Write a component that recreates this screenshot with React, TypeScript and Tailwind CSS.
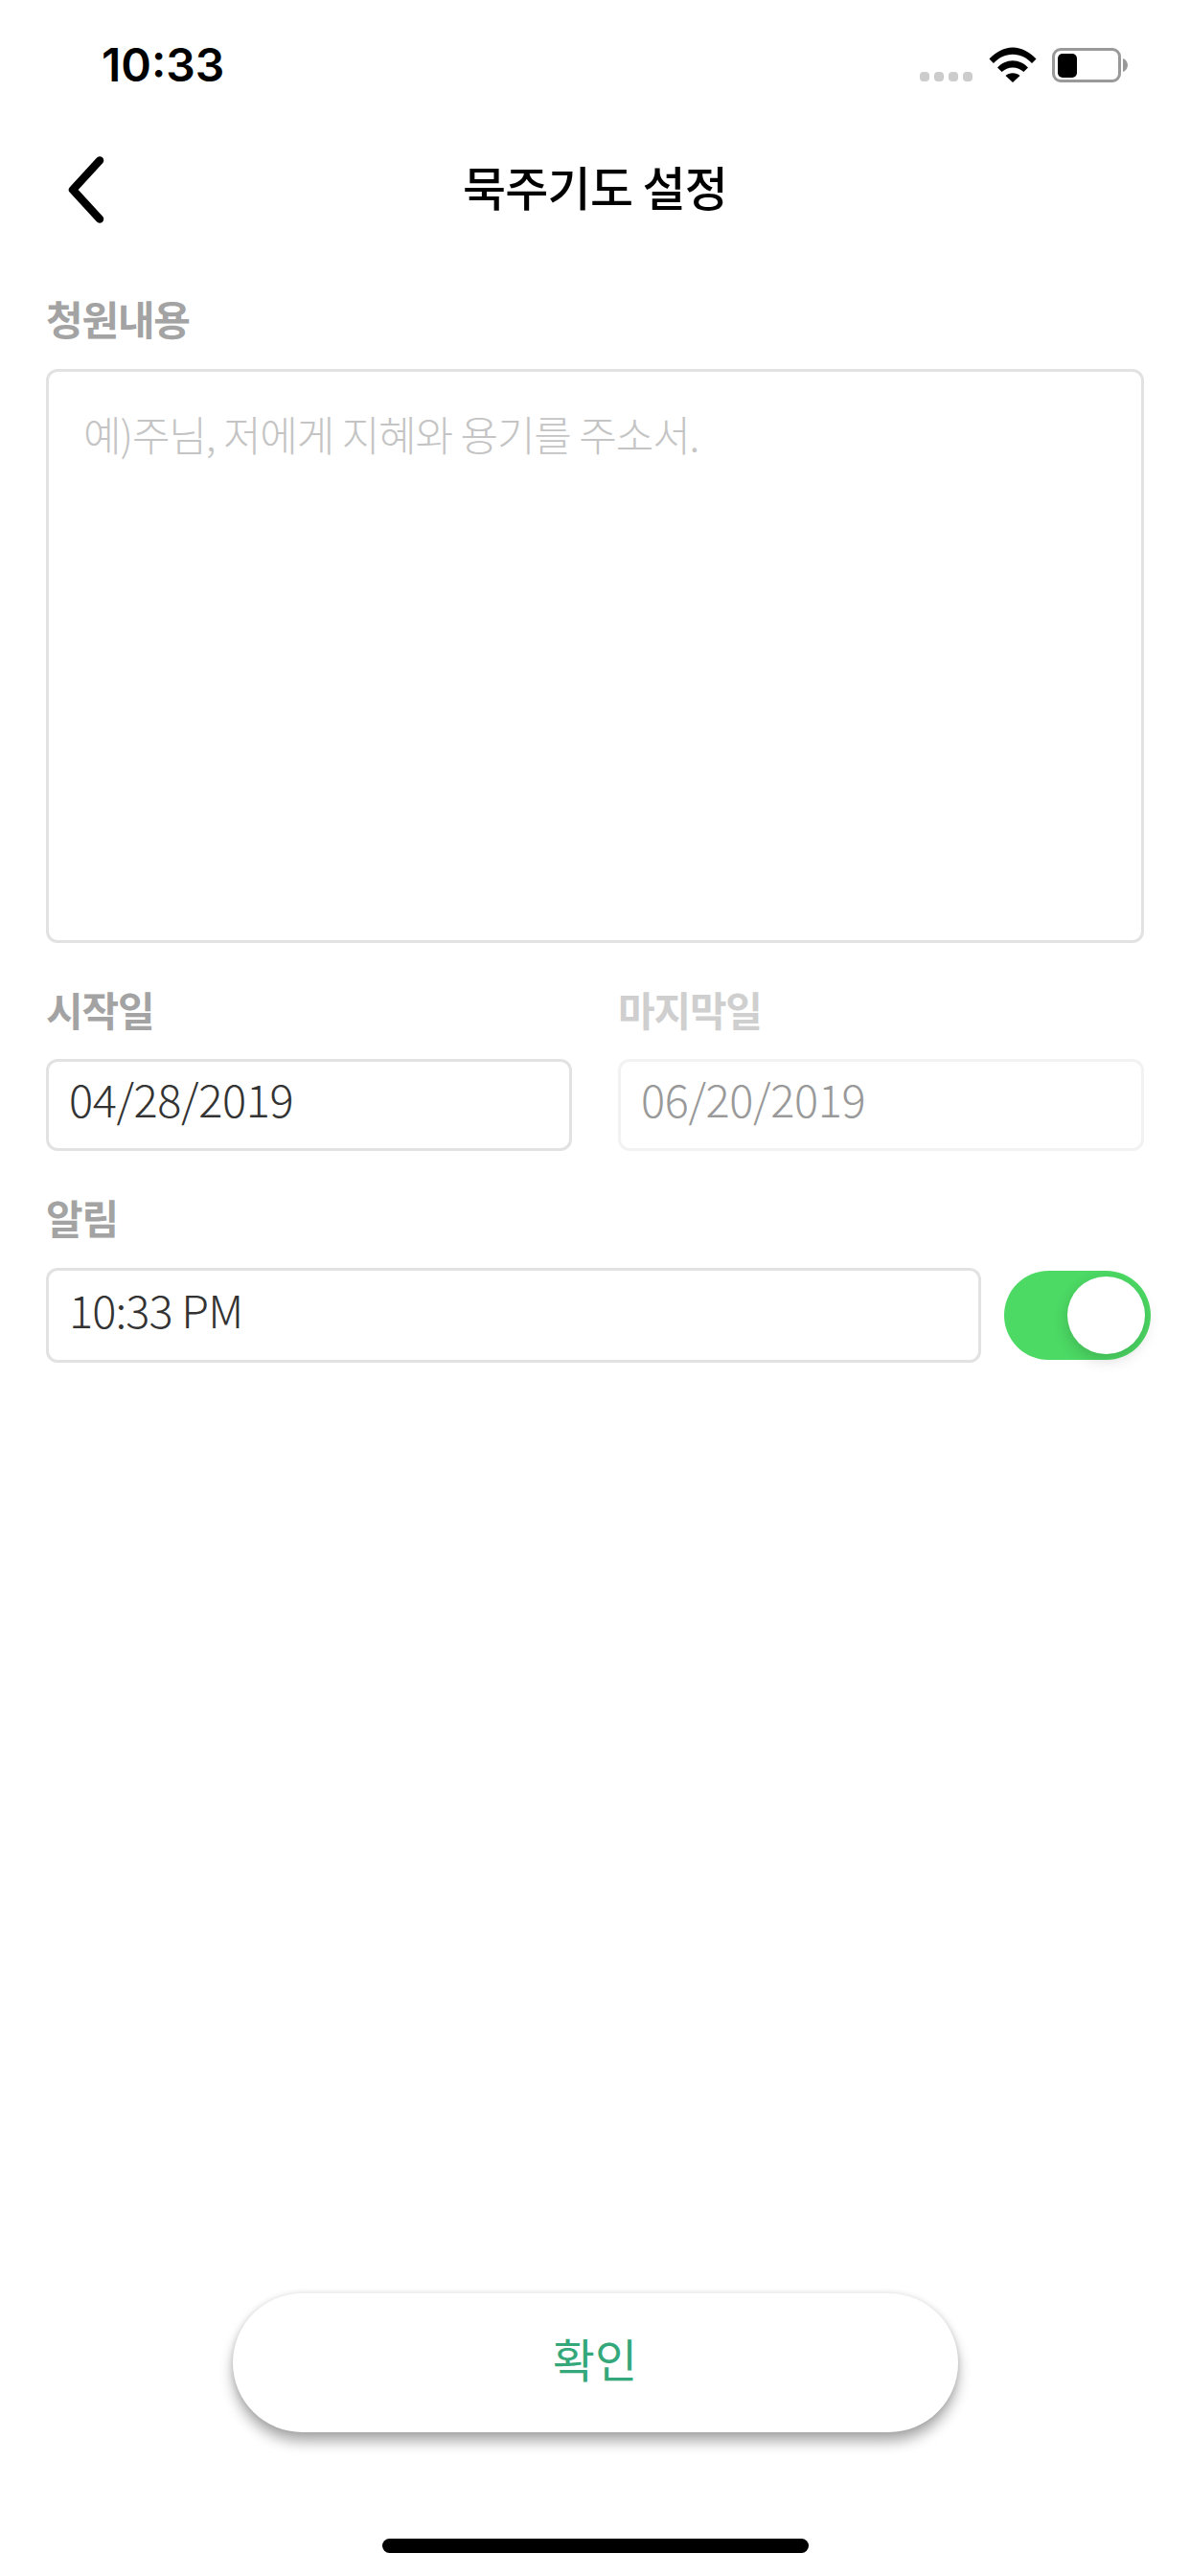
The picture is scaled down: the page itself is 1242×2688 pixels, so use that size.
import React from "react";

const FONT = "font-['Noto_Sans_CJK_KR','Noto_Sans',sans-serif]";

const Label = ({ text, faded }: { text: string; faded?: boolean }) => (
  <p className={`h-[60px] text-[42px] leading-[56px] font-bold tracking-[-1.2px] ${faded ? "text-[#cfcfcf]" : "text-[#a3a3a3]"}`}>
    {text}
  </p>
);

const Wifi = () => (
  <svg width="50" height="37" viewBox="0 0 50 37" fill="none">
    <path d="M0.5 12.5C7 5.8 15.6 0.5 25 0.5s18 5.3 24.5 12l-4.5 4.5C39.800 11.500 33 7.800 25 7.800S10.200 11.500 5 17z" fill="#000" />
    <path d="M9 21.500C13 17.300 18.800 14.300 25 14.300s12 3 16 7.200l-4.600 4.600C33.400 23.200 29.400 21.500 25 21.500s-8.400 1.700-11.400 4.600z" fill="#000" />
    <path d="M17.500 30C19.500 28.300 22 27.300 25 27.300s5.500 1 7.500 2.700L25 37z" fill="#000" />
  </svg>
);

const Battery = () => (
  <div className="flex items-center">
    <div className="flex h-[36px] w-[72px] items-center rounded-[9px] border-[3px] border-[#999999] pl-[3px]">
      <div className="h-[25px] w-[20px] rounded-[5px] bg-black" />
    </div>
    <svg width="5" height="14" viewBox="0 0 5 14" className="ml-[2px]">
      <path d="M0 0c3 1 5 4 5 7s-2 6-5 7z" fill="#999999" />
    </svg>
  </div>
);

export default function App() {
  return (
    <div className={`${FONT} flex h-[2688px] w-[1242px] flex-col bg-white`}>
      <div className="flex h-[132px] items-start justify-between pt-[50px] pl-[106px] pr-[65px]">
        <span className="font-['Inter',sans-serif] text-[48px] leading-[36px] font-semibold text-black">10:33</span>
        <div className="-mt-[1px] flex items-end">
          <div className="mb-[1px] flex gap-[5px]">
            <div className="h-[10px] w-[10px] rounded-[4px] bg-[#cccccc]" />
            <div className="h-[10px] w-[10px] rounded-[4px] bg-[#cccccc]" />
            <div className="h-[10px] w-[10px] rounded-[4px] bg-[#cccccc]" />
            <div className="h-[10px] w-[10px] rounded-[4px] bg-[#cccccc]" />
          </div>
          <div className="ml-[17px]">
            <Wifi />
          </div>
          <div className="ml-[16px]">
            <Battery />
          </div>
        </div>
      </div>

      <div className="grid h-[132px] grid-cols-[1fr_auto_1fr] items-center">
        <div className="pl-[70px]">
          <svg width="40" height="70" viewBox="0 0 40 70" fill="none">
            <path d="M34 4.500L6 35l28 30.500" stroke="#000" strokeWidth="8.500" strokeLinecap="round" strokeLinejoin="round" />
          </svg>
        </div>
        <h1 className="-mt-[8px] text-[49px] leading-[60px] font-medium tracking-[-0.8px] text-black">묵주기도 설정</h1>
        <div />
      </div>

      <div className="flex flex-col px-[48px] pt-[40px]">
        <Label text="청원내용" />
        <div className="mt-[21px] h-[599px] rounded-[12px] border-[3px] border-[#e2e2e2] pt-[34px] pl-[36px]">
          <p className="text-[43px] leading-[60px] font-light tracking-[-1.1px] text-[#c4c4c4]">예)주님, 저에게 지혜와 용기를 주소서.</p>
        </div>

        <div className="mt-[41px] grid grid-cols-2 gap-x-[48px]">
          <div>
            <Label text="시작일" />
            <div className="mt-[20px] flex h-[96px] items-center rounded-[12px] border-[3px] border-[#e2e2e2] pb-[14px] pl-[21px]">
              <span className="text-[47px] leading-[60px] font-light tracking-[-0.4px] text-[#333333]">04/28/2019</span>
            </div>
          </div>
          <div>
            <Label text="마지막일" faded />
            <div className="mt-[20px] flex h-[96px] items-center rounded-[12px] border-[3px] border-[#f2f2f2] pb-[14px] pl-[21px]">
              <span className="text-[47px] leading-[60px] font-light tracking-[-0.4px] text-[#999999]">06/20/2019</span>
            </div>
          </div>
        </div>

        <div className="mt-[41px]">
          <Label text="알림" />
        </div>
        <div className="mt-[21px] flex items-center">
          <div className="flex h-[99px] flex-1 items-center rounded-[12px] border-[3px] border-[#e2e2e2] pb-[14px] pl-[21px]">
            <span className="text-[47px] leading-[60px] font-light tracking-[-0.9px] text-[#333333]">10:33 PM</span>
          </div>
          <div className="-mr-[7px] ml-[24px] flex h-[93px] w-[153px] items-center justify-end rounded-full bg-[#4cd964] pr-[6px]">
            <div className="h-[81px] w-[81px] rounded-full bg-white shadow-[0_6px_16px_rgba(0,0,0,0.16)]" />
          </div>
        </div>
      </div>

      <div className="mt-auto flex flex-col items-center pb-[24px]">
        <button className="h-[145px] w-[757px] rounded-full bg-white pb-[12px] text-[48px] font-normal text-[#34a87a] shadow-[0_10px_14px_rgba(0,0,0,0.32),0_0_6px_rgba(0,0,0,0.12)]">
          확인
        </button>
        <div className="mt-[111px] h-[15px] w-[445px] rounded-[8px] bg-black" />
      </div>
    </div>
  );
}
